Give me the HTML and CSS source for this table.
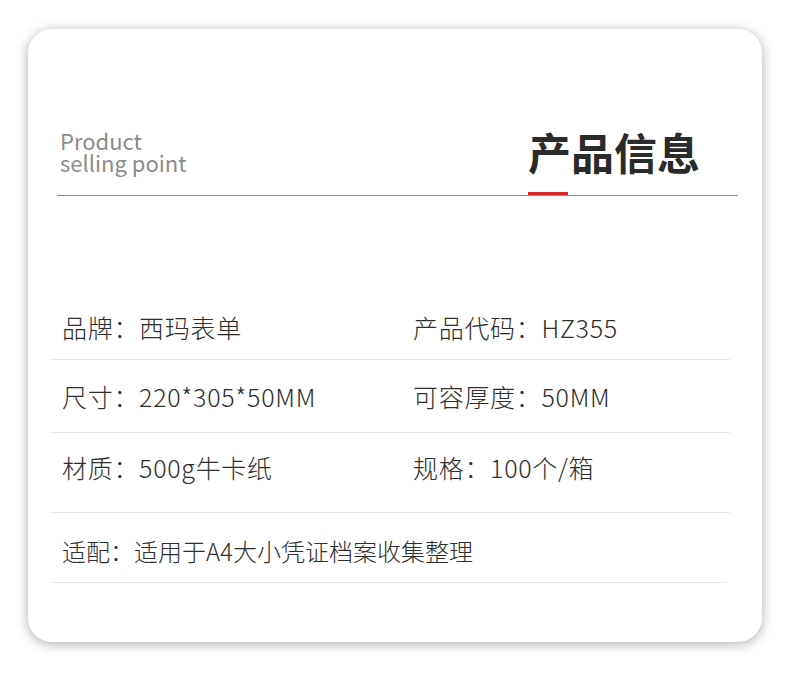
FILE: index.html
```html
<!DOCTYPE html>
<html lang="zh-CN">
<head>
<meta charset="utf-8">
<title>产品信息</title>
<link rel="stylesheet" href="styles.css">
</head>
<body>
<div class="card">
  <div class="header">
    <div class="sub">
      <div class="sub-line">Product</div>
      <div class="sub-line">selling point</div>
    </div>
    <div class="title">产品信息</div>
  </div>
  <div class="rows">
    <div class="row r1">
      <div class="cell">品牌：西玛表单</div>
      <div class="cell">产品代码：HZ355</div>
    </div>
    <div class="row r2">
      <div class="cell">尺寸：220*305*50MM</div>
      <div class="cell">可容厚度：50MM</div>
    </div>
    <div class="row r3">
      <div class="cell">材质：500g牛卡纸</div>
      <div class="cell">规格：100个/箱</div>
    </div>
    <div class="row r4">
      <div class="cell wide">适配：适用于A4大小凭证档案收集整理</div>
    </div>
  </div>
</div>
</body>
</html>
```
FILE: styles.css
```css
html, body {
  margin: 0;
  padding: 0;
  background: #ffffff;
}
body {
  width: 790px;
  height: 687px;
  overflow: hidden;
  font-family: "Noto Sans CJK SC", "Noto Sans", sans-serif;
}
.card {
  margin: 29px 0 0 28px;
  width: 734px;
  height: 613px;
  background: #ffffff;
  border-radius: 24px;
  box-shadow: 0 2px 11px 1px rgba(0, 0, 0, 0.28);
  overflow: hidden;
}
.header {
  margin: 0 24px 0 29px;
  padding-top: 100px;
  display: flex;
  justify-content: space-between;
  align-items: flex-end;
  border-bottom: 1px solid #8c8c8c;
}
.sub {
  margin: 0 0 22px 3px;
  font-size: 22px;
  font-weight: 400;
  color: #8b8b8b;
}
.sub-line {
  height: 22px;
  line-height: 22px;
}
.title {
  position: relative;
  margin: 0 38px 22px 0;
  font-size: 43px;
  line-height: 43px;
  font-weight: 700;
  color: #2b2b2b;
}
.title::after {
  content: "";
  position: absolute;
  left: 0;
  top: calc(100% + 19px);
  width: 40px;
  height: 3px;
  background: #d9282d;
}
.rows {
  margin: 116px 32px 0 22px;
}
.row {
  display: grid;
  grid-template-columns: 351px 1fr;
  padding-left: 12px;
  border-bottom: 1px solid #e8e8e8;
  font-size: 25px;
  line-height: 30px;
  font-weight: 300;
  letter-spacing: 0.7px;
  color: #2e2e2e;
  white-space: nowrap;
}
.r1 { padding-top: 0; padding-bottom: 17px; }
.r2 { padding-top: 21px; padding-bottom: 21px; }
.r3 { padding-top: 19px; padding-bottom: 30px; }
.r4 { padding-top: 23px; padding-bottom: 16px; margin-right: 3px; }
.wide {
  grid-column: 1 / 3;
  font-size: 24px;
  letter-spacing: 0;
}
```
